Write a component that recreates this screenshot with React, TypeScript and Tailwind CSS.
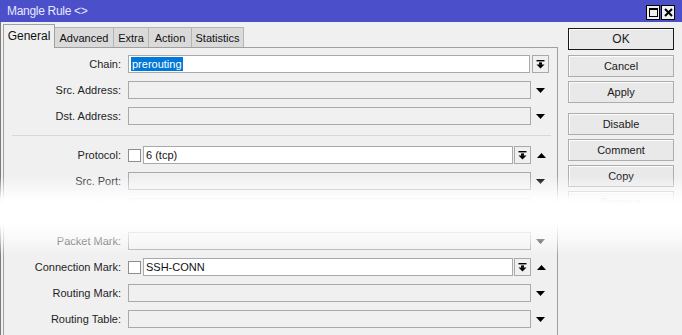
import React from "react";

const DropBtn = () => (
  <div className="w-[17px] h-[18px] border border-[#a9a9a9] bg-[#f0f0f0] flex items-center justify-center shrink-0">
    <svg width="9" height="9" viewBox="0 0 9 9">
      <rect x="0.5" y="0" width="8" height="1.4" fill="#000" />
      <rect x="3" y="2.4" width="3" height="2.4" fill="#000" />
      <polygon points="0.5,4.6 8.5,4.6 4.5,8.6" fill="#000" />
    </svg>
  </div>
);

const Arrow = ({ up }: { up?: boolean }) => (
  <div className="w-[19px] h-[18px] flex items-center justify-center shrink-0">
    <svg width="9" height="5" viewBox="0 0 9 5">
      {up ? (
        <polygon points="0,5 9,5 4.5,0" fill="#000" />
      ) : (
        <polygon points="0,0 9,0 4.5,5" fill="#000" />
      )}
    </svg>
  </div>
);

const Row = ({
  label,
  children,
  className = "",
}: {
  label: string;
  children: React.ReactNode;
  className?: string;
}) => (
  <div className={`flex items-center h-[18px] ${className}`}>
    <div className="w-[117px] text-right shrink-0 whitespace-nowrap text-[#1e1e1e]">
      {label}
    </div>
    <div className="ml-[7px] flex items-center">{children}</div>
  </div>
);

const EmptyField = () => (
  <div className="w-[403px] h-[18px] border border-[#a9a9a9] bg-[#f0f0f0]" />
);

const CheckField = ({ value }: { value: string }) => (
  <>
    <div className="w-[13px] h-[13px] border border-[#8e8f8f] bg-white shrink-0" />
    <div className="ml-[2px] w-[370px] h-[18px] border border-[#a9a9a9] bg-white flex items-center pl-[2px] text-[#111]">
      {value}
    </div>
    <div className="ml-[1px]">
      <DropBtn />
    </div>
    <div className="ml-[1px]">
      <Arrow up />
    </div>
  </>
);

const Btn = ({ label, primary, className = "" }: { label: string; primary?: boolean; className?: string }) => (
  <div
    className={`h-[22px] flex items-center justify-center text-[#1a1a1a] bg-[#e9e9e9] border shadow-[inset_1px_1px_0_#fcfcfc] ${
      primary ? "border-[#1a1a1a] text-[12px]" : "border-[#adadad]"
    } ${className}`}
  >
    {label}
  </div>
);

const tabs = [
  { name: "Advanced", w: "w-[60px]" },
  { name: "Extra", w: "w-[36px]" },
  { name: "Action", w: "w-[44px]" },
  { name: "Statistics", w: "w-[53px]" },
];

export default function App() {
  return (
    <div className="relative w-[682px] h-[335px] overflow-hidden bg-[#f0f0f0] font-['Liberation_Sans',Arial,sans-serif] text-[11px]">
      {/* title bar */}
      <div className="h-[22px] bg-[#4b4fca] flex items-center justify-between">
        <span className="pl-[7px] text-[12px] text-[#e8e8ff] tracking-[-0.3px]">Mangle Rule &lt;&gt;</span>
        <div className="flex gap-[1px] mr-[7px] mt-[2px]">
          <div className="w-[14px] h-[15px] border border-black bg-[#f0f0f0] flex items-center justify-center">
            <svg width="9" height="9" viewBox="0 0 9 9">
              <rect x="0.5" y="0.5" width="8" height="8" fill="none" stroke="#000" />
              <rect x="0" y="0" width="9" height="2" fill="#000" />
            </svg>
          </div>
          <div className="w-[14px] h-[15px] border border-black bg-[#f0f0f0] flex items-center justify-center">
            <svg width="9" height="9" viewBox="0 0 9 9">
              <path d="M1 1 L8 8 M8 1 L1 8" stroke="#000" strokeWidth="2" />
            </svg>
          </div>
        </div>
      </div>

      <div className="flex h-[313px] border-l border-[#7a7a7a]">
        {/* left: tabs and panel */}
        <div className="ml-[2px] w-[555px] flex flex-col">
          <div className="flex items-end h-[25px]">
            <div className="relative z-10 -mb-px w-[52px] h-[24px] border border-b-0 border-[#a0a0a0] bg-[#f0f0f0] flex items-center justify-center pb-[1px] text-[12px] text-[#111]">
              General
            </div>
            {tabs.map((t) => (
              <div
                key={t.name}
                className={`${t.w} -ml-px h-[20px] border border-b-0 border-[#b4b4b4] bg-[#dadada] flex items-center justify-center pt-[1px] text-[#111]`}
              >
                {t.name}
              </div>
            ))}
          </div>
          <div className="flex-1 border border-b-0 border-[#a0a0a0] pt-[7px] flex flex-col">
            <Row label="Chain:">
              <div className="w-[402px] h-[18px] border border-[#a9a9a9] bg-white flex items-center pl-[2px]">
                <span className="bg-[#0078d7] text-white leading-[14px] px-[1px]">prerouting</span>
              </div>
              <div className="ml-[2px]">
                <DropBtn />
              </div>
            </Row>
            <Row label="Src. Address:" className="mt-[8px]">
              <EmptyField />
              <Arrow />
            </Row>
            <Row label="Dst. Address:" className="mt-[8px]">
              <EmptyField />
              <Arrow />
            </Row>
            <div className="mt-[10px] mb-[10px] ml-[8px] mr-[6px] border-t border-[#d8d8d8]" />
            <Row label="Protocol:">
              <CheckField value="6 (tcp)" />
            </Row>
            <Row label="Src. Port:" className="mt-[8px]">
              <EmptyField />
              <Arrow />
            </Row>
            <Row label="Dst. Port:" className="mt-[8px]">
              <EmptyField />
              <Arrow />
            </Row>
            <Row label="Packet Mark:" className="mt-[16px]">
              <EmptyField />
              <Arrow />
            </Row>
            <Row label="Connection Mark:" className="mt-[8px]">
              <CheckField value="SSH-CONN" />
            </Row>
            <Row label="Routing Mark:" className="mt-[8px]">
              <EmptyField />
              <Arrow />
            </Row>
            <Row label="Routing Table:" className="mt-[8px]">
              <EmptyField />
              <Arrow />
            </Row>
          </div>
        </div>

        {/* right: buttons */}
        <div className="ml-[10px] w-[106px] pt-[6px] flex flex-col gap-[4px]">
          <Btn label="OK" primary className="mb-[1px]" />
          <Btn label="Cancel" />
          <Btn label="Apply" />
          <Btn label="Disable" className="mt-[6px]" />
          <Btn label="Comment" />
          <Btn label="Copy" />
          <Btn label="Remove" />
        </div>
      </div>

      {/* white fade band */}
      <div className="pointer-events-none absolute inset-x-0 top-[176px] h-[80px] bg-[linear-gradient(to_bottom,rgba(255,255,255,0)_0%,rgba(255,255,255,0.6)_18%,rgba(255,255,255,0.93)_28%,#fff_35%,#fff_60%,rgba(255,255,255,0.55)_81%,rgba(255,255,255,0)_100%)]" />
    </div>
  );
}
